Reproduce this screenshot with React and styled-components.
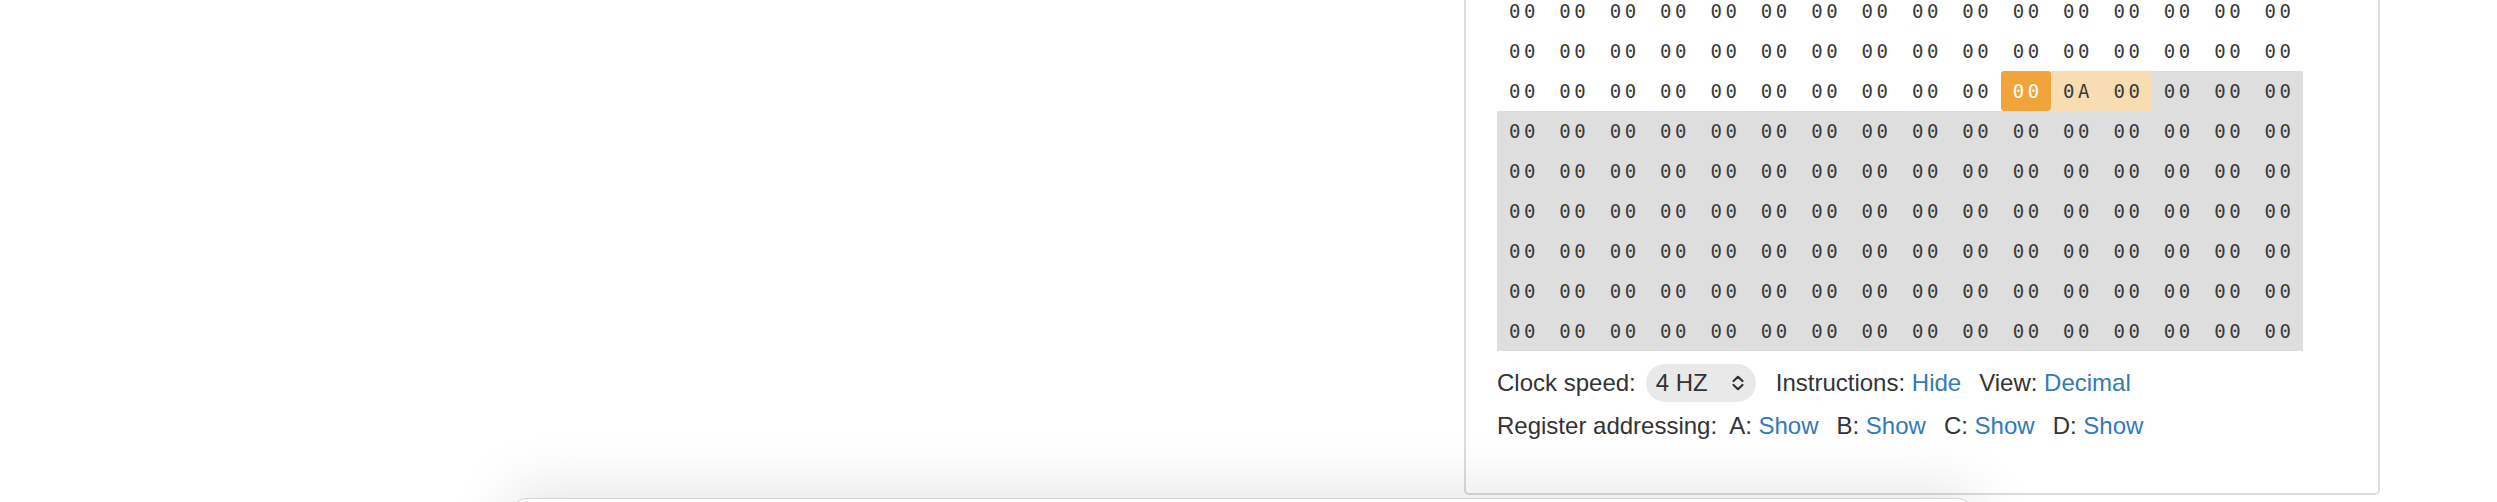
import styled, { createGlobalStyle } from "styled-components";

const GlobalStyle = createGlobalStyle`
  html, body {
    margin: 0;
    padding: 0;
    background: #fff;
    overflow: hidden;
  }
  body {
    font-family: "Liberation Sans", Arial, sans-serif;
    color: #333;
  }
`;

const ROWS = 9;
const COLS = 16;

// row 2 holds the current instruction: pc at col 10, its operands after it
const cellKind = (r, c) => {
  if (r < 2) return "plain";
  if (r === 2) {
    if (c < 10) return "plain";
    if (c === 10) return "pc";
    if (c < 13) return "operand";
    return "stack";
  }
  return "stack";
};

const cellValue = (r, c) => (r === 2 && c === 11 ? "0A" : "00");

const App = () => {
  const rows = [];
  for (let r = 0; r < ROWS; r++) {
    for (let c = 0; c < COLS; c++) {
      rows.push(
        <Cell key={r + "-" + c} kind={cellKind(r, c)}>
          {cellValue(r, c)}
        </Cell>
      );
    }
  }

  return (
    <>
      <GlobalStyle />
      <Page>
        <Panel>
          <MemoryGrid>{rows}</MemoryGrid>
          <Controls>
            <ControlRow>
              <Label>Clock speed:</Label>
              <Select>
                <span>4 HZ</span>
                <svg width="16" height="16" viewBox="0 0 16 16" fill="none">
                  <path
                    d="M3.5 6 L8 1.8 L12.5 6"
                    stroke="#333"
                    strokeWidth="2.2"
                    strokeLinecap="round"
                    strokeLinejoin="round"
                  />
                  <path
                    d="M3.5 10 L8 14.2 L12.5 10"
                    stroke="#333"
                    strokeWidth="2.2"
                    strokeLinecap="round"
                    strokeLinejoin="round"
                  />
                </svg>
              </Select>
              <Item wide>
                Instructions: <Link>Hide</Link>
              </Item>
              <Item>
                View: <Link>Decimal</Link>
              </Item>
            </ControlRow>
            <ControlRow spaced>
              <Label>Register addressing:</Label>
              <Item wide>
                A: <Link>Show</Link>
              </Item>
              <Item>
                B: <Link>Show</Link>
              </Item>
              <Item>
                C: <Link>Show</Link>
              </Item>
              <Item>
                D: <Link>Show</Link>
              </Item>
            </ControlRow>
          </Controls>
        </Panel>
      </Page>
      <BottomSheet />
    </>
  );
};

const Page = styled.div`
  display: grid;
  grid-template-columns: 1fr 916px;
  padding-right: 117px;
`;

const Panel = styled.div`
  grid-column: 2;
  margin-top: -11px;
  border: 2px solid #dcdcdc;
  border-radius: 5px;
  padding: 0 0 49px 31px;
`;

const MemoryGrid = styled.div`
  display: grid;
  grid-template-columns: repeat(16, 1fr);
  width: 806px;
`;

const cellBg = {
  plain: "transparent",
  pc: "#f0a43a",
  operand: "#f8dcb2",
  stack: "#dedede",
};

const Cell = styled.div`
  height: 40px;
  display: flex;
  align-items: center;
  justify-content: center;
  font-family: "DejaVu Sans Mono", monospace;
  font-size: 19px;
  letter-spacing: 3.5px;
  padding-left: 3.5px;
  background: ${(p) => cellBg[p.kind]};
  color: ${(p) => (p.kind === "pc" ? "#fff" : "#3a3a3a")};
  border-radius: ${(p) => (p.kind === "pc" ? "3px" : "0")};
`;

const Controls = styled.div`
  display: flex;
  flex-direction: column;
  gap: 6px;
  padding-top: 13px;
  font-size: 24px;
`;

const ControlRow = styled.div`
  display: flex;
  align-items: center;
  gap: 18px;
  height: ${(p) => (p.spaced ? "36px" : "38px")};
  white-space: nowrap;
`;

const Label = styled.span`
  margin-right: -8px;
`;

const Item = styled.span`
  margin-left: ${(p) => (p.wide ? "2px" : "0")};
`;

const Link = styled.a`
  color: #337ab7;
  cursor: pointer;
`;

const Select = styled.div`
  display: flex;
  align-items: center;
  justify-content: space-between;
  width: 110px;
  height: 38px;
  box-sizing: border-box;
  padding: 0 10px;
  border-radius: 19px;
  background: #e9e9e9;
  font-size: 24px;

  svg {
    display: block;
  }
`;

const BottomSheet = styled.div`
  position: fixed;
  left: 512px;
  top: 498px;
  width: 1458px;
  height: 200px;
  background: #fff;
  border: 1px solid #d2d2d2;
  border-radius: 14px;
  box-shadow: 0 -4px 60px 6px rgba(0, 0, 0, 0.1);
  z-index: 2;
`;

export default App;
